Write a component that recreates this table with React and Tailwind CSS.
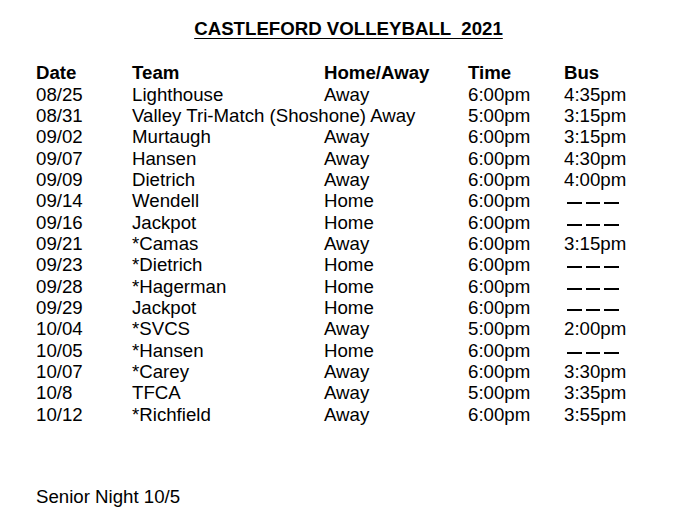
const games = [
  ["08/25", "Lighthouse", "Away", "6:00pm", "4:35pm"],
  ["08/31", "Valley Tri-Match (Shoshone) Away", "", "5:00pm", "3:15pm"],
  ["09/02", "Murtaugh", "Away", "6:00pm", "3:15pm"],
  ["09/07", "Hansen", "Away", "6:00pm", "4:30pm"],
  ["09/09", "Dietrich", "Away", "6:00pm", "4:00pm"],
  ["09/14", "Wendell", "Home", "6:00pm", null],
  ["09/16", "Jackpot", "Home", "6:00pm", null],
  ["09/21", "*Camas", "Away", "6:00pm", "3:15pm"],
  ["09/23", "*Dietrich", "Home", "6:00pm", null],
  ["09/28", "*Hagerman", "Home", "6:00pm", null],
  ["09/29", "Jackpot", "Home", "6:00pm", null],
  ["10/04", "*SVCS", "Away", "5:00pm", "2:00pm"],
  ["10/05", "*Hansen", "Home", "6:00pm", null],
  ["10/07", "*Carey", "Away", "6:00pm", "3:30pm"],
  ["10/8", "TFCA", "Away", "5:00pm", "3:35pm"],
  ["10/12", "*Richfield", "Away", "6:00pm", "3:55pm"],
];

// no bus for home games, shown as three short dashes
function NoBus() {
  return (
    <span className="flex gap-[4px] pt-[12px] ml-[3px]">
      <span className="w-[14.5px] h-[2px] bg-black" />
      <span className="w-[14.5px] h-[2px] bg-black" />
      <span className="w-[14.5px] h-[2px] bg-black" />
    </span>
  );
}

function Row({ date, team, where, time, bus, bold }) {
  const wide = team.length > 20;
  return (
    <div className={`grid grid-cols-[96px_192px_144px_96px_1fr] ${bold ? "font-bold" : ""}`}>
      <span>{date}</span>
      <span className={wide ? "col-span-2 whitespace-nowrap" : ""}>{team}</span>
      {!wide && <span>{where}</span>}
      <span>{time}</span>
      {bus === null ? <NoBus /> : <span>{bus}</span>}
    </div>
  );
}

export default function App() {
  return (
    <div className="w-[674px] h-[529px] bg-white text-black font-['Liberation_Sans',Arial,sans-serif] text-[18.67px] leading-[21.33px] pl-[36px] pt-[18px]">
      <h1 className="font-bold underline underline-offset-[3px] text-center whitespace-pre w-[674px] -ml-[36px] pl-[23px]">
        CASTLEFORD VOLLEYBALL  2021
      </h1>
      <div className="mt-[23px]">
        <Row date="Date" team="Team" where="Home/Away" time="Time" bus="Bus" bold />
        {games.map((g) => (
          <Row key={g[0]} date={g[0]} team={g[1]} where={g[2]} time={g[3]} bus={g[4]} />
        ))}
      </div>
      <p className="mt-[61px]">Senior Night 10/5</p>
    </div>
  );
}
